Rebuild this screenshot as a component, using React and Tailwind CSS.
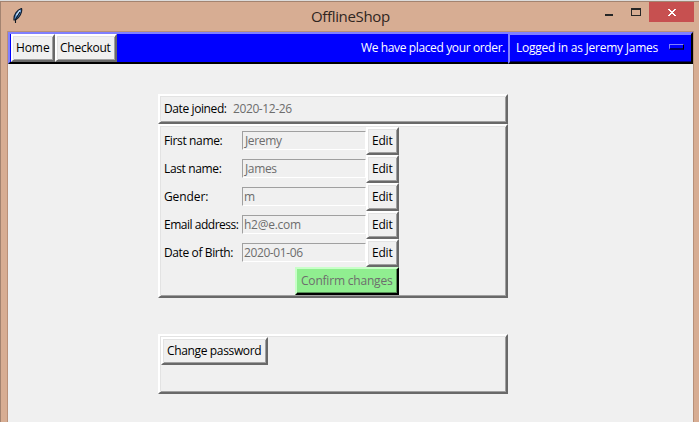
const raised =
  'border-2 border-t-white border-l-white border-r-[#696969] border-b-[#696969] bg-[#f0f0f0] shadow-[inset_1px_1px_0_#e3e3e3,inset_-1px_-1px_0_#a0a0a0]';

const fields = [
  { label: 'First name:', value: 'Jeremy', labelClass: 'tracking-[-0.36px]', valueClass: 'pl-[2px] tracking-[-0.35px]' },
  { label: 'Last name:', value: 'James', labelClass: 'tracking-[-0.36px]', valueClass: 'pl-[2px] tracking-[-0.35px]' },
  { label: 'Gender:', value: 'm', labelClass: 'tracking-[-0.1px]', valueClass: 'pl-px' },
  { label: 'Email address:', value: 'h2@e.com', labelClass: 'tracking-[-0.48px]', valueClass: 'pl-px tracking-[-0.25px]' },
  { label: 'Date of Birth:', value: '2020-01-06', labelClass: 'tracking-[-0.38px]', valueClass: 'pl-px' },
];

function Button({ className = '', children }) {
  return (
    <button className={`flex shrink-0 items-center justify-start whitespace-nowrap ${raised} ${className}`}>
      {children}
    </button>
  );
}

function Feather() {
  return (
    <svg className="h-4 w-4" viewBox="0 0 16 16">
      <path d="M4 12C3.500 7 7 2 11.500 .5C12.500 4 9.500 10 5.500 12Z" fill="#5590d0" stroke="#142030" strokeWidth="1.200" />
      <path d="M10 2.500L6.500 7.500" stroke="#c8e2fa" strokeWidth="1.500" />
      <path d="M10 4L5.500 11.500L5.500 15" fill="none" stroke="#101820" strokeWidth="1.100" />
    </svg>
  );
}

function TitleBar() {
  return (
    <header className="flex h-[29px] shrink-0 items-start">
      <div className="w-[303px] shrink-0 pt-[6px] pl-[9px]">
        <Feather />
      </div>
      <h1 className="mt-[3px] ml-[7px] w-[80px] text-[15px] leading-[22px] tracking-[-0.35px] whitespace-nowrap text-[#30261f]">
        OfflineShop
      </h1>
      <svg className="mr-[6px] ml-auto h-5 w-[38px] shrink-0" viewBox="0 0 38 20" shapeRendering="crispEdges">
        <path d="M0 12h8v2h-8z" fill="#262626" />
        <path d="M26 6h10v8h-10zM27 8v5h8V8z" fill="#262626" fillRule="evenodd" />
      </svg>
      <button className="mr-[5px] flex h-5 w-[45px] shrink-0 justify-center bg-[#c75050] pt-[7px]">
        <svg className="h-[7px] w-[8px]" viewBox="0 0 8 7" shapeRendering="crispEdges">
          <path d="M0 0h2v1h1v1h2v-1h1v-1h2v1h-1v1h-1v1h-1v1h1v1h1v1h1v1h-2v-1h-1v-1h-2v1h-1v1h-2v-1h1v-1h1v-1h1v-1h-1v-1h-1v-1h-1z" fill="#fff" />
        </svg>
      </button>
    </header>
  );
}

export default function App() {
  return (
    <div className="flex h-[422px] w-[699px] flex-col overflow-hidden border-t border-[#dcdcdc] bg-[#d7ad93] font-['Open_Sans','Noto_Sans',sans-serif] text-[12px] leading-[16px] tracking-[-0.4px] text-black">
      <div className="flex min-h-0 flex-1 flex-col border-t border-l border-[#a38370]">
        <TitleBar />
        <main className="mr-[5px] ml-[6px] flex min-h-0 flex-1 flex-col border-t border-r border-l border-[#b89079] bg-[#f0f0f0]">
          <nav className="flex h-8 shrink-0 bg-[#0000ff]">
            <div className="flex min-w-0 flex-1 items-start border-2 border-r-0 border-t-[#8080ff] border-b-black border-l-[#8080ff] pl-px text-white">
              <Button className="h-7 w-[44px] pl-[3px] tracking-[-0.1px] text-black">Home</Button>
              <Button className="h-7 w-[62px] pl-[3px] tracking-[-0.25px] text-black">Checkout</Button>
              <span className="mt-[6px] mr-[3px] ml-auto tracking-[-0.37px] whitespace-nowrap">We have placed your order.</span>
            </div>
            <button className="flex w-[185px] shrink-0 items-center justify-between border-2 border-t-[#8080ff] border-r-black border-b-black border-l-[#8080ff] pr-[7px] pl-[6px] tracking-[-0.24px] whitespace-nowrap text-white shadow-[inset_0_1px_0_#8080ff,inset_0_-1px_0_#000080]">
              Logged in as Jeremy James
              <span className="mt-[-2px] h-[6px] w-[15px] border border-t-[#8080ff] border-r-black border-b-2 border-b-[#000060] border-l-[#8080ff]" />
            </button>
          </nav>
          <div className="ml-[150px] flex w-[350px] flex-col pt-[30px]">
            <section className={`flex h-[30px] items-center pl-[4px] ${raised}`}>
              <span className="w-[69px] whitespace-nowrap">Date joined:</span>
              <span className="text-[#6d6d6d]">2020-12-26</span>
            </section>
            <section className={`flex h-[174px] flex-col pt-px pl-[4px] ${raised}`}>
              {fields.map(({ label, value, labelClass, valueClass }) => (
                <div key={label} className="flex h-7 shrink-0 items-center">
                  <span className={`w-[78px] shrink-0 whitespace-nowrap ${labelClass}`}>{label}</span>
                  <span className={`mt-[-1px] flex h-[19px] w-[124px] shrink-0 items-center border border-t-[#a0a0a0] border-r-white border-b-white border-l-[#a0a0a0] pt-px text-[#6d6d6d] ${valueClass}`}>
                    {value}
                  </span>
                  <Button className="h-7 w-[33px] pl-1 tracking-[-0.2px]">Edit</Button>
                </div>
              ))}
              <button className="ml-[131px] flex h-7 w-[104px] shrink-0 items-center justify-start border-2 border-t-[#c8ffc8] border-r-black border-b-black border-l-[#c8ffc8] bg-[#90ee90] pl-1 tracking-[-0.2px] whitespace-nowrap text-[#6d6d6d] shadow-[inset_-1px_-1px_0_#568e56]">
                Confirm changes
              </button>
            </section>
            <section className={`mt-9 h-[60px] pt-px pl-px ${raised}`}>
              <Button className="h-7 w-[107px] pl-1 tracking-[-0.35px]">Change password</Button>
            </section>
          </div>
        </main>
      </div>
    </div>
  );
}
